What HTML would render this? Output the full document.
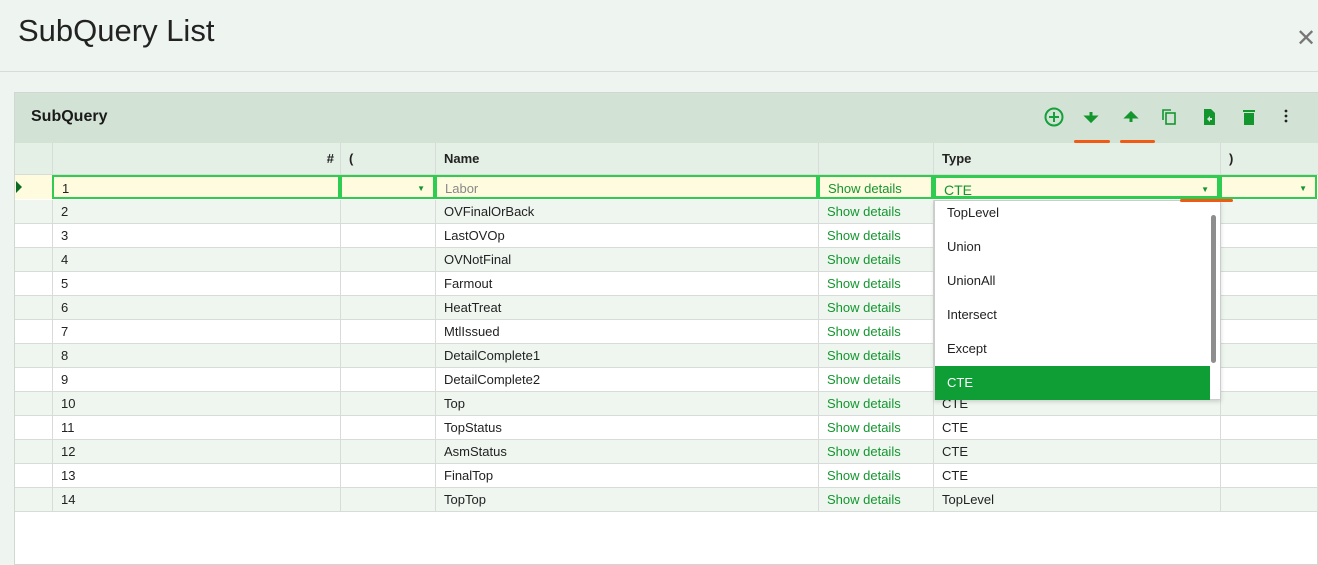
<!DOCTYPE html><html><head><style>
*{box-sizing:border-box;margin:0;padding:0}
body{width:1318px;height:565px;overflow:hidden;background:#eef4ef;font-family:"Liberation Sans",sans-serif;font-size:13px;color:#222;position:relative}
.a{position:absolute}
.title{left:18px;top:13px;font-size:31px;color:#222}
.close{left:1296px;top:24px;font-size:24px;color:#777}
.hl{left:0;top:71px;width:1318px;height:1px;background:#d6dcd7}
.panel{left:14px;top:92px;width:1304px;height:473px;background:#fff;border:1px solid #cfd8d1}
.ph{left:15px;top:93px;width:1303px;height:50px;background:#d2e3d6}
.row{position:absolute;left:15px;width:1303px;height:24px;border-bottom:1px solid #d8dcd9}
.c{position:absolute;top:0;height:100%;border-left:1px solid #d8dcd9;line-height:24px;padding-left:8px;white-space:nowrap}
.g{color:#14962f}
.it{height:34px;line-height:34px;padding-left:12px}
</style></head><body>
<div class="a title">SubQuery List</div>
<div class="a close">✕</div>
<div class="a hl"></div>
<div class="a panel"></div>
<div class="a ph"></div>
<div class="a" style="left:31px;top:108px;font-size:16px;font-weight:bold;color:#1a1a1a">SubQuery</div>
<svg class="a" style="left:1040px;top:104px" width="260" height="42">
<circle cx="14" cy="13" r="8.5" fill="none" stroke="#14a03a" stroke-width="2"/><path d="M14 8v10M9 13h10" stroke="#14a03a" stroke-width="2"/>
<path d="M51 8v6M47 13l4 4 4-4z" stroke="#14962f" stroke-width="3" fill="#14962f"/>
<path d="M91 18v-6M87 13l4-4 4 4z" stroke="#14962f" stroke-width="3" fill="#14962f"/>
<rect x="126" y="9" width="9" height="11" fill="none" stroke="#14962f" stroke-width="1.6"/><path d="M123 16V6h8" fill="none" stroke="#14962f" stroke-width="1.6"/>
<path d="M164 5h7l4 4v12h-11z" fill="#14962f"/><path d="M167 15l3-3v2h2v2h-2v2z" fill="#d2e3d6"/>
<rect x="204" y="9" width="10" height="12" fill="#14962f"/><rect x="203" y="6" width="12" height="2" fill="#14962f"/>
<circle cx="246" cy="7" r="1.4" fill="#222"/><circle cx="246" cy="12" r="1.4" fill="#222"/><circle cx="246" cy="17" r="1.4" fill="#222"/>
<rect x="34" y="36" width="36" height="3" rx="1.5" fill="#f05a14"/><rect x="80" y="36" width="35" height="3" rx="1.5" fill="#f05a14"/>
</svg>
<div class="row" style="top:143px;height:32px;background:#e4efe6;font-weight:bold">
<div class="c" style="left:0;width:37px;border:0"></div>
<div class="c" style="left:37px;width:288px;text-align:right;padding-right:6px;line-height:32px">#</div>
<div class="c" style="left:325px;width:95px;line-height:32px">(</div>
<div class="c" style="left:420px;width:383px;line-height:32px">Name</div>
<div class="c" style="left:803px;width:115px"></div>
<div class="c" style="left:918px;width:287px;line-height:32px">Type</div>
<div class="c" style="left:1205px;width:96px;line-height:32px">)</div>
</div>
<div class="row" style="top:175px;background:#fffbdf;border:0">
<div class="a" style="left:1px;top:6px;border-left:6px solid #0b6b22;border-top:6px solid transparent;border-bottom:6px solid transparent"></div>
<div class="c" style="left:37px;width:288px;border:2px solid #2ecc50">1</div>
<div class="c" style="left:325px;width:95px;border:2px solid #2ecc50"><span class="a" style="right:8px;top:0;font-size:8px;color:#14962f">▼</span></div>
<div class="c" style="left:420px;width:383px;border:2px solid #2ecc50;color:#888">Labor</div>
<div class="c g" style="left:803px;width:115px;border:2px solid #2ecc50">Show details</div>
<div class="c" style="left:918px;width:287px;border:3px solid #2ecc50;color:#14962f;font-size:14px">CTE<span class="a" style="right:8px;top:0;font-size:8px;color:#14962f">▼</span></div>
<div class="c" style="left:1205px;width:97px;border:2px solid #2ecc50"><span class="a" style="right:8px;top:0;font-size:8px;color:#14962f">▼</span></div>
</div>
<div id="rows"></div>
<script>
var d=[["OVFinalOrBack",""],["LastOVOp",""],["OVNotFinal",""],["Farmout",""],["HeatTreat",""],["MtlIssued",""],["DetailComplete1",""],["DetailComplete2",""],["Top","CTE"],["TopStatus","CTE"],["AsmStatus","CTE"],["FinalTop","CTE"],["TopTop","TopLevel"]],h="";
d.forEach(function(r,i){var n=i+2;h+='<div class="row" style="top:'+(200+i*24)+'px;background:'+(n%2?'#fff':'#eef6ef')+'"><div class="c" style="left:0;width:37px;border:0"></div><div class="c" style="left:37px;width:288px">'+n+'</div><div class="c" style="left:325px;width:95px"></div><div class="c" style="left:420px;width:383px">'+r[0]+'</div><div class="c g" style="left:803px;width:115px">Show details</div><div class="c" style="left:918px;width:287px">'+r[1]+'</div><div class="c" style="left:1205px;width:98px;border-right:1px solid #d8dcd9"></div></div>'});
document.getElementById('rows').innerHTML=h;
</script>
<div class="a" style="left:934px;top:200px;width:287px;height:200px;background:#fff;border:1px solid #ccc;box-shadow:0 2px 4px rgba(0,0,0,.15)">
<div class="it" style="height:29px;line-height:24px">TopLevel</div>
<div class="it">Union</div>
<div class="it">UnionAll</div>
<div class="it">Intersect</div>
<div class="it">Except</div>
<div class="it" style="width:275px;background:#0e9e35;color:#fff">CTE</div>
<div class="a" style="left:276px;top:14px;width:5px;height:148px;background:#8e8e8e;border-radius:3px"></div>
</div>
<div class="a" style="left:1180px;top:199px;width:53px;height:3px;background:#f05a14;border-radius:2px"></div>
</body></html>
